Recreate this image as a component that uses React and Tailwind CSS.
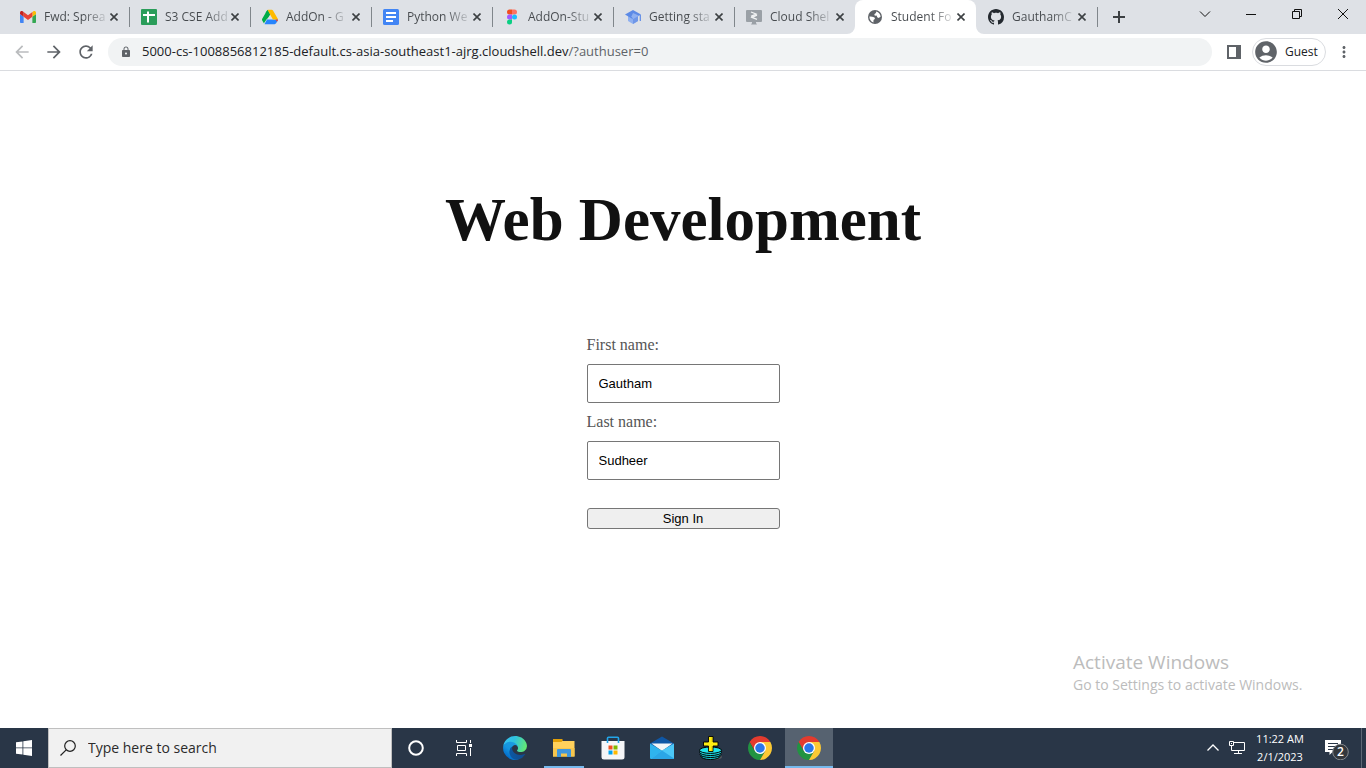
import { MdArrowBack, MdArrowForward, MdRefresh, MdLock, MdAccountCircle, MdMoreVert } from 'react-icons/md';

const GmailIcon = () => (
  <svg viewBox="52 36 88 78" className="h-4 w-4">
    <path fill="#4285f4" d="M58 108h14V74L52 59v43c0 3.32 2.69 6 6 6" />
    <path fill="#34a853" d="M120 108h14c3.32 0 6-2.69 6-6V59l-20 15" />
    <path fill="#fbbc04" d="M120 48v26l20-15v-8c0-7.42-8.47-11.65-14.4-7.2" />
    <path fill="#ea4335" d="M72 74V48l24 18 24-18v26L96 92" />
    <path fill="#c5221f" d="M52 51v8l20 15V48l-5.6-4.2c-5.94-4.45-14.4-.22-14.4 7.2" />
  </svg>
);

const SheetsIcon = () => (
  <svg viewBox="0 0 16 16" className="h-4 w-4">
    <rect width="16" height="16" rx="1" fill="#2a9d5a" />
    <path d="M2 6h12M7 2.500v11" stroke="#fff" strokeWidth="2" />
  </svg>
);

const DriveIcon = () => (
  <svg viewBox="0 -4 87.3 86" className="h-4 w-4">
    <path fill="#00ac47" d="M43.65 25 29.9 1.2c-1.35.8-2.5 1.9-3.3 3.3l-25.4 44A9.06 9.06 0 0 0 0 53c0 1.55.4 3.1 1.2 4.5l9 15.5z" />
    <path fill="#2684fc" d="M87.3 53H27.5L13.75 76.8c1.35.8 2.9 1.2 4.5 1.2h50.8c3.3 0 6.2-1.6 7.8-4.5l9.25-16c.8-1.4 1.2-2.95 1.2-4.5z" />
    <path fill="#ffba00" d="m86.1 48.5-25.4-44C59.1 1.7 56.2 0 52.9 0H34.4c-1.6 0-3.15.45-4.5 1.2L59.8 53h27.5c0-1.55-.4-3.1-1.2-4.5z" />
    <path fill="#00ac47" d="M43.65 25 29.9 1.2 20 16l10 32z" />
    <path fill="#ea4335" d="M73.500 53h13.800c0 1.500-.4 3.100-1.200 4.500l-4.500 8z" />
  </svg>
);

const DocsIcon = () => (
  <svg viewBox="0 0 16 16" className="h-4 w-4">
    <rect width="16" height="16" rx="1.5" fill="#4285f4" />
    <path d="M3 4h10M3 8h10M3 12h7" stroke="#fff" strokeWidth="1.8" />
  </svg>
);

const FigmaIcon = () => (
  <svg viewBox="0 0 16 16" className="h-4 w-4">
    <path fill="#f24e1e" d="M5.500.5H8v5H5.500a2.500 2.500 0 0 1 0-5z" />
    <path fill="#ff7262" d="M8 .5h2.500a2.500 2.500 0 0 1 0 5H8z" />
    <path fill="#a259ff" d="M5.500 5.500H8v5H5.500a2.500 2.500 0 0 1 0-5z" />
    <circle cx="10.500" cy="8" r="2.500" fill="#1abcfe" />
    <path fill="#0acf83" d="M5.500 10.500H8V13a2.500 2.500 0 1 1-2.500-2.500z" />
  </svg>
);

const CapIcon = () => (
  <svg viewBox="0 0 16 16" className="h-4 w-4">
    <path fill="#8fb0f0" d="M3 7v5l5 3 5-3V7z" />
    <path fill="#6f97e8" d="M8 8.5V15l5-3V7z" />
    <path fill="#5c8ae6" d="M8 1 0 5.6l8 4.7 8-4.7z" />
    <path fill="#8fb0f0" d="m8 4 6 2.7-6 3.6-1.5-3z" />
    <path stroke="#5c8ae6" strokeWidth="1.2" d="M15.3 6v6" />
  </svg>
);

const ShellIcon = () => (
  <svg viewBox="0 0 16 16" className="h-4 w-4">
    <path fill="#9aa0a6" d="M1 1h14a1 1 0 0 1 1 1v10a1 1 0 0 1-1 1h-5v1l1 1.5H5L6 14v-1H1a1 1 0 0 1-1-1V2a1 1 0 0 1 1-1z" />
    <path d="m5 3 5 2-5 2.4M11 6.2 6 8.4l5 2" fill="none" stroke="#f1f3f4" strokeWidth="1.3" />
  </svg>
);

const GithubIcon = () => (
  <svg viewBox="0 0 16 16" className="h-4 w-4">
    <path fill="#24292f" d="M8 0C3.58 0 0 3.58 0 8c0 3.54 2.29 6.53 5.47 7.59.4.07.55-.17.55-.38 0-.19-.01-.82-.01-1.49-2.01.37-2.53-.49-2.69-.94-.09-.23-.48-.94-.82-1.13-.28-.15-.68-.52-.01-.53.63-.01 1.08.58 1.23.82.72 1.21 1.87.87 2.33.66.07-.52.28-.87.51-1.07-1.78-.2-3.64-.89-3.64-3.95 0-.87.31-1.59.82-2.15-.08-.2-.36-1.02.08-2.12 0 0 .67-.21 2.2.82.64-.18 1.32-.27 2-.27s1.36.09 2 .27c1.53-1.04 2.2-.82 2.2-.82.44 1.1.16 1.92.08 2.12.51.56.82 1.27.82 2.15 0 3.07-1.87 3.75-3.65 3.95.29.25.54.73.54 1.48 0 1.07-.01 1.93-.01 2.2 0 .21.15.46.55.38A8.01 8.01 0 0 0 16 8c0-4.42-3.58-8-8-8z" />
  </svg>
);

const GlobeIcon = () => (
  <svg viewBox="0 0 16 16" className="h-4 w-4">
    <circle cx="8" cy="8" r="7" fill="#5f6368" />
    <path fill="#fff" d="M2.400 7.500C4 7.200 5.500 7.800 7 8.200c1.200.4 1.200 1.800.2 2.200-.8.300-.8 1.200-.7 3C4 12.800 2.300 10.500 2.400 7.500zM9.200 2.500c2.600.6 4.300 2.800 4.400 5.300-1 .4-1.600 1.400-2.600 1-1.300-.6-.7-1.700-1.600-2.300-.8-.5-1.900.2-2-.8-.1-1.200 1.900-.9 1.800-3.200z" />
  </svg>
);

const TABS = [
  { title: 'Fwd: Sprea', Icon: GmailIcon },
  { title: 'S3 CSE Add', Icon: SheetsIcon },
  { title: 'AddOn - G', Icon: DriveIcon },
  { title: 'Python We', Icon: DocsIcon },
  { title: 'AddOn-Stu', Icon: FigmaIcon },
  { title: 'Getting sta', Icon: CapIcon },
  { title: 'Cloud Shel', Icon: ShellIcon, beforeActive: true },
  { title: 'Student Fo', Icon: GlobeIcon, active: true },
  { title: 'GauthamC', Icon: GithubIcon },
];

function Tab({ title, Icon, active, beforeActive }) {
  return (
    <div className={active ? 'relative flex h-full w-[121px] items-center rounded-t-lg bg-white pl-3' : 'relative flex h-full w-[121px] items-center pl-3'}>
      {active && (
        <>
          <svg viewBox="0 0 8 8" className="absolute bottom-0 -left-2 h-2 w-2"><path fill="#fff" d="M8 0v8H0a8 8 0 0 0 8-8z" /></svg>
          <svg viewBox="0 0 8 8" className="absolute -right-2 bottom-0 h-2 w-2"><path fill="#fff" d="M0 0v8h8a8 8 0 0 1-8-8z" /></svg>
        </>
      )}
      <Icon />
      <span className="ml-2 flex w-[62px]">
        <a href="#" className="bg-linear-to-r from-[#45494d] from-65% to-[#45494d]/20 bg-clip-text text-xs whitespace-nowrap text-transparent">{title}</a>
      </span>
      <button aria-label={`Close ${title}`} className="flex h-4 w-4 items-center justify-center">
        <svg viewBox="0 0 8 8" className="h-2 w-2"><path d="M.5.5l7 7M7.5.5l-7 7" stroke="#3c4043" strokeWidth="1.6" /></svg>
      </button>
      {!active && !beforeActive && <span className="-mr-px ml-auto h-5 w-px bg-[#80868b]" />}
    </div>
  );
}

const WindowButton = ({ label, children }) => (
  <button aria-label={label} className="flex h-7 w-[46px] items-center justify-center">
    <svg viewBox="0 0 12 12" className="h-3 w-3" fill="none" stroke="#111">{children}</svg>
  </button>
);

function TabStrip() {
  return (
    <header className="flex h-[34px] bg-[#dee1e6] pl-2">
      <nav aria-label="Tabs" className="flex">
        {TABS.map((tab) => <Tab key={tab.title} {...tab} />)}
      </nav>
      <button aria-label="New tab" className="ml-2 flex w-7 items-center justify-center">
        <svg viewBox="0 0 12 12" className="h-3 w-3"><path d="M6 0v12M0 6h12" stroke="#3c4043" strokeWidth="2" /></svg>
      </button>
      <div className="ml-auto flex">
        <WindowButton label="Search tabs"><path d="m1 3.5 5 5 5-5" /></WindowButton>
        <WindowButton label="Minimize"><path d="M1 6.5h10" /></WindowButton>
        <WindowButton label="Restore"><path d="M1.5 3.5h7v7h-7zM3.5 3.5v-2h7v7h-2" /></WindowButton>
        <WindowButton label="Close"><path d="m1 1 10 10M11 1 1 11" /></WindowButton>
      </div>
    </header>
  );
}

function Toolbar() {
  return (
    <div className="flex h-[37px] items-center border-b border-[#dadce0] bg-white pr-[13px]">
      <button aria-label="Back" className="ml-3 text-[#babcbe]"><MdArrowBack className="h-5 w-5" /></button>
      <button aria-label="Forward" className="ml-3 text-[#5f6368]"><MdArrowForward className="h-5 w-5" /></button>
      <button aria-label="Reload" className="ml-3 text-[#5f6368]"><MdRefresh className="h-5 w-5" /></button>
      <div className="ml-3 flex h-7 flex-1 items-center rounded-full bg-[#f1f3f4] pl-3">
        <MdLock className="h-3 w-3 text-[#5f6368]" />
        <p className="ml-[10px] text-[13px] text-[#202124]">5000-cs-1008856812185-default.cs-asia-southeast1-ajrg.cloudshell.dev<span className="text-[#5f6368]">/?authuser=0</span></p>
      </div>
      <button aria-label="Side panel" className="ml-[15px]">
        <svg viewBox="0 0 14 14" className="h-[14px] w-[14px]"><path fill="#5f6368" fillRule="evenodd" d="M0 0h14v14H0zM2 2v10h7V2z" /></svg>
      </button>
      <button className="ml-[11px] flex h-7 w-[74px] items-center rounded-full border border-[#dadce0] text-xs text-[#202124]">
        <MdAccountCircle className="h-[26px] w-[26px] text-[#5f6368]" />
        <span className="ml-[6px]">Guest</span>
      </button>
      <button aria-label="Menu" className="ml-[9px] text-[#5f6368]"><MdMoreVert className="h-[18px] w-[18px]" /></button>
    </div>
  );
}

function Field({ id, label, value }) {
  return (
    <>
      <label htmlFor={id} className="mb-[10px] text-base leading-[18px] text-[#555]">{label}</label>
      <input id={id} type="text" defaultValue={value} className="mb-[10px] h-[39px] rounded-[2px] border border-[#767676] px-[11px] font-['Liberation_Sans',Arial,sans-serif] text-[13px] text-black" />
    </>
  );
}

function Page() {
  return (
    <main className="relative flex flex-1 flex-col items-center bg-white pt-[114px] font-['Liberation_Serif','Times_New_Roman',serif]">
      <h1 className="text-[61px] leading-[69px] font-bold text-[#111]">Web Development</h1>
      <form className="mt-[82px] flex w-[193px] flex-col" onSubmit={(e) => e.preventDefault()}>
        <Field id="first-name" label="First name:" value="Gautham" />
        <Field id="last-name" label="Last name:" value="Sudheer" />
        <button type="submit" className="mt-[18px] h-[21px] rounded-[3px] border border-[#767676] bg-[#efefef] font-['Liberation_Sans',Arial,sans-serif] text-[13px] leading-[19px] text-black">Sign In</button>
      </form>
      <aside className="absolute right-[57px] bottom-8 w-[236px] font-['Open_Sans',sans-serif] text-[#bcbcbc]">
        <p className="text-[19px] leading-6">Activate Windows</p>
        <p className="text-sm leading-[22px]">Go to Settings to activate Windows.</p>
      </aside>
    </main>
  );
}

const CortanaIcon = () => <svg viewBox="0 0 16 16" className="h-4 w-4"><circle cx="8" cy="8" r="6.8" fill="none" stroke="#fff" strokeWidth="2" /></svg>;

const TaskViewIcon = () => (
  <svg viewBox="0 0 16 16" className="h-4 w-4" fill="none" stroke="#fff">
    <path d="M.5 0v2.5h10V0M.5 16v-2.5h10V16M1.500 5.5h8v5h-8zM14.5 0v3M14.5 8v8" />
    <path fill="#fff" stroke="none" d="M13 4h3v3h-3z" />
  </svg>
);

const EdgeIcon = () => (
  <svg viewBox="4 4 257 257" className="h-6 w-6">
    <defs>
      <linearGradient id="edge-a" x1="63" y1="177" x2="241" y2="177" gradientUnits="userSpaceOnUse"><stop stopColor="#0c59a4" /><stop offset="1" stopColor="#114a8b" /></linearGradient>
      <linearGradient id="edge-b" x1="150" y1="90" x2="40" y2="235" gradientUnits="userSpaceOnUse"><stop stopColor="#1b9de2" /><stop offset=".5" stopColor="#1595df" /><stop offset="1" stopColor="#0067c7" /></linearGradient>
      <linearGradient id="edge-c" x1="20" y1="50" x2="255" y2="130" gradientUnits="userSpaceOnUse"><stop stopColor="#35c1f1" /><stop offset=".4" stopColor="#2fc2df" /><stop offset="1" stopColor="#66eb6e" /></linearGradient>
    </defs>
    <path fill="url(#edge-a)" d="M235.68 195.46a93.73 93.73 0 0 1-10.54 4.71 101.87 101.87 0 0 1-35.9 6.46c-47.32 0-88.54-32.55-88.54-74.32A31.48 31.48 0 0 1 117.13 105c-42.8 1.8-53.8 46.4-53.8 72.53 0 73.88 68.09 81.37 82.76 81.37 7.91 0 19.84-2.3 27-4.56l1.31-.44a128.34 128.34 0 0 0 66.6-52.8 4 4 0 0 0-5.32-5.64z" />
    <path fill="url(#edge-b)" d="M110.34 246.34A79.2 79.2 0 0 1 87.6 225a80.72 80.72 0 0 1 29.53-120c3.12-1.47 8.45-4.13 15.54-4a32.35 32.35 0 0 1 25.69 13 31.88 31.88 0 0 1 6.36 18.66c0-.21 24.46-79.6-80-79.6-43.9 0-80 41.66-80 78.21a130.15 130.15 0 0 0 12.11 56 128 128 0 0 0 156.38 67.11 75.55 75.55 0 0 1-62.78-8z" />
    <path fill="url(#edge-c)" d="M156.94 153.78c-.81 1.05-3.3 2.5-3.3 5.66 0 2.61 1.7 5.12 4.72 7.23 14.38 10 41.49 8.68 41.56 8.68a59.56 59.56 0 0 0 30.27-8.35 61.38 61.38 0 0 0 30.43-52.88c.26-22.41-8-37.31-11.34-43.91-21.19-41.41-66.93-65.25-116.67-65.25a128 128 0 0 0-128 126.2c.48-36.54 36.8-66.05 80-66.05 3.5 0 23.46.34 42 10.07 16.34 8.58 24.9 18.94 30.85 29.21 6.18 10.67 7.28 24.15 7.28 29.52s-2.74 13.33-7.8 19.87z" />
  </svg>
);

const ExplorerIcon = () => (
  <svg viewBox="0 0 24 24" className="h-6 w-6">
    <path fill="#ffd15c" d="M1 5h21.500v15.500H1z" />
    <path fill="#f7c64d" d="M1 12h21.500v8.500H1z" />
    <path fill="#e3a008" d="M1 3h9l1 1-1.500 2H1z" />
    <path fill="#3f97dd" d="M5 21v-7q0-1 1-1h12q1 0 1 1v7h-4v-3.500H9V21z" />
  </svg>
);

const StoreIcon = () => (
  <svg viewBox="0 0 24 24" className="h-6 w-6">
    <path fill="#f5f6f8" d="M.5 5h23v16q0 2.500-2.500 2.500H3Q.5 23.500.5 21z" />
    <path d="M6.500 7V2.200q0-1 1-1h9q1 0 1 1V7" fill="none" stroke="#22a6ea" strokeWidth="1.6" />
    <path fill="#f25022" d="M7.500 9.500h4v4h-4z" /><path fill="#7fba00" d="M12.500 9.500h4v4h-4z" />
    <path fill="#00a4ef" d="M7.500 14.500h4v4h-4z" /><path fill="#ffb900" d="M12.500 14.500h4v4h-4z" />
  </svg>
);

const MailIcon = () => (
  <svg viewBox="0 0 24 24" className="h-6 w-6">
    <path fill="#0f57a5" d="M0 7.500 12 .5l12 7V12H0z" />
    <path fill="#f3f6f8" d="M1.500 7.500h21L12 15z" />
    <path fill="#2fb4ee" d="M0 7.500 24 22q0 1-1 1H1q-1 0-1-1z" />
    <path fill="#4cc8f7" d="M24 7.500V22q0 1-1 1H1L12 14.500z" />
    <path fill="#2ba6e6" d="m12 14.500 12 8q-.3.500-1 .5H1z" />
  </svg>
);

const PlusStackIcon = () => (
  <svg viewBox="0 0 24 24" className="h-6 w-6">
    <ellipse cx="14" cy="21" rx="9" ry="3" fill="#555b60" />
    <ellipse cx="11.500" cy="20.300" rx="9.500" ry="3.200" fill="#19c9cf" stroke="#000" />
    <ellipse cx="11.500" cy="18.300" rx="10.500" ry="3.200" fill="#19c9cf" stroke="#000" />
    <ellipse cx="11.500" cy="16.200" rx="11" ry="3.300" fill="#19d9df" stroke="#000" />
    <ellipse cx="11.500" cy="14.200" rx="11" ry="3.200" fill="#22e5ea" stroke="#000" />
    <path fill="#ffee12" stroke="#000" strokeWidth=".9" d="M9.500.5h4.500v5.500h5v4h-5v5.500H9.500V10h-5V6h5z" />
    <path fill="#a89a00" d="M12.800 1h.9v5h-.9zM12.800 10h.9v5h-.9z" />
  </svg>
);

const ChromeIcon = () => (
  <svg viewBox="2 2 44 44" className="h-6 w-6">
    <path fill="#e33b2e" d="M43.05 13A22 22 0 0 0 4.95 13L14.47 29.5 24 24V13z" />
    <path fill="#229342" d="M4.95 13A22 22 0 0 0 24 46L33.53 29.5 24 24 14.47 29.500z" />
    <path fill="#fcc934" d="M24 46A22 22 0 0 0 43.05 13H24V24L33.53 29.500z" />
    <circle cx="24" cy="24" r="11" fill="#fff" />
    <circle cx="24" cy="24" r="8.700" fill="#2a76ea" />
  </svg>
);

const APPS = [
  { name: 'Microsoft Edge', Icon: EdgeIcon },
  { name: 'File Explorer', Icon: ExplorerIcon, state: 'open' },
  { name: 'Microsoft Store', Icon: StoreIcon },
  { name: 'Mail', Icon: MailIcon },
  { name: 'Stack', Icon: PlusStackIcon },
  { name: 'Google Chrome', Icon: ChromeIcon },
  { name: 'Google Chrome window', Icon: ChromeIcon, state: 'active' },
];

const APP_CLASS = {
  open: 'bg-[linear-gradient(#76b9ed,#76b9ed)] bg-[length:40px_2px] bg-bottom bg-no-repeat',
  active: 'border-b-2 border-[#76b9ed] bg-[#566270] pt-[2px]',
};

function Taskbar() {
  return (
    <footer className="flex h-10 bg-[#293647]">
      <button aria-label="Start" className="flex w-12 items-center justify-center">
        <svg viewBox="0 0 16 16" className="h-4 w-4"><path fill="#fff" d="M0 2.300 6.500 1.400v6.100H0zM7.300 1.300 16 0v7.500H7.300zM0 8.300h6.500v6.300L0 13.700zM7.300 8.300H16V16l-8.700-1.300z" /></svg>
      </button>
      <label className="flex w-[344px] items-center border border-[#bfbfbf] bg-[#f1f1f1] pl-[11px]">
        <svg viewBox="0 0 16 16" className="h-4 w-4" fill="none" stroke="#222" strokeWidth="1.2"><circle cx="10" cy="6" r="5.300" /><path d="M6.200 9.800.500 15.500" /></svg>
        <input type="text" aria-label="Search" placeholder="Type here to search" className="ml-3 min-w-0 flex-1 text-sm text-[#2b2b2b] outline-none placeholder:text-[#2b2b2b]" />
      </label>
      <button aria-label="Cortana" className="flex w-12 items-center justify-center"><CortanaIcon /></button>
      <button aria-label="Task view" className="flex w-12 items-center justify-center"><TaskViewIcon /></button>
      <div className="ml-[3px] flex gap-px">
        {APPS.map(({ name, Icon, state }) => (
          <button key={name} aria-label={name} className={`flex w-12 items-center justify-center ${APP_CLASS[state] || ''}`}><Icon /></button>
        ))}
      </div>
      <div className="ml-auto flex items-center text-white">
        <button aria-label="Show hidden icons"><svg viewBox="0 0 12 12" className="h-3 w-3" fill="none" stroke="#fff" strokeWidth="1.300"><path d="m.5 8.500 5.500-5.500 5.500 5.500" /></svg></button>
        <button aria-label="Network" className="ml-[10px]">
          <svg viewBox="0 0 16 16" className="h-4 w-4" fill="none" stroke="#fff"><path d="M5 2.500h10.500v8H3.500M.5 1.500h4v4h-4zM2.500 5.500v5h2M9.500 10.500v3M5 13.500h8M2 3.500h1" /></svg>
        </button>
        <button className="ml-2 w-[54px] text-center text-[11px] leading-[18px] whitespace-nowrap">11:22 AM<br />2/1/2023</button>
        <button aria-label="2 notifications" className="relative ml-[18px] mr-3 h-6 w-6">
          <svg viewBox="0 0 24 24" className="h-6 w-6">
            <path fill="#fff" d="M0 4h16v12H7.500L4.500 19v-3H0z" />
            <path d="M3 7.500h10M3 10.500h10M3 13.500h6" stroke="#293647" />
            <circle cx="15.500" cy="19" r="0" />
            <circle cx="15.500" cy="16" r="7.800" fill="#33373c" stroke="#84888e" />
          </svg>
          <span className="absolute top-2 left-3 text-[12px] leading-4 font-semibold">2</span>
        </button>
        <span className="mr-1 h-10 w-px bg-[#5d6875]" />
      </div>
    </footer>
  );
}

export default function App() {
  return (
    <div className="flex min-h-screen flex-col bg-white font-['Open_Sans',sans-serif]">
      <TabStrip />
      <Toolbar />
      <Page />
      <Taskbar />
    </div>
  );
}
